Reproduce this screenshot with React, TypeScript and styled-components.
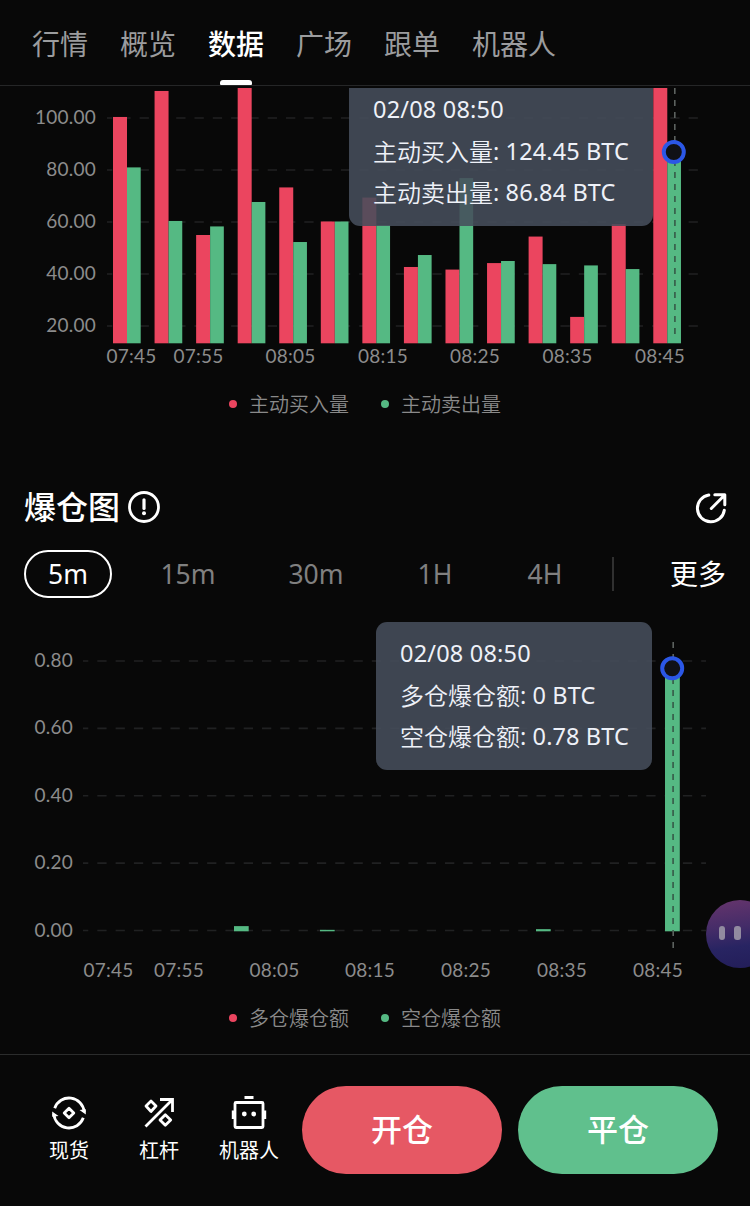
import React from "react";
import styled, { createGlobalStyle } from "styled-components";

const GlobalStyle = createGlobalStyle`
  * { box-sizing: border-box; }
  body { margin: 0; background: #080808; }
  button { font: inherit; color: inherit; background: none; border: 0; padding: 0; }
`;

const Screen = styled.div`
  position: relative;
  display: flex;
  flex-direction: column;
  width: 750px;
  height: 1206px;
  overflow: hidden;
  background: #080808;
  color: #fff;
  font-family: "Noto Sans", "Noto Sans CJK SC", sans-serif;
`;

const Tabs = styled.nav`
  display: flex;
  flex: none;
  gap: 32px;
  height: 86px;
  padding-left: 32px;
  border-bottom: 1px solid #252627;
`;

const Tab = styled.button<{ $active?: boolean }>`
  position: relative;
  height: 85px;
  padding-top: 1px;
  font-family: "Noto Sans CJK SC", sans-serif;
  font-size: 28px;
  line-height: 84px;
  font-weight: ${(p) => (p.$active ? 500 : 400)};
  color: ${(p) => (p.$active ? "#fff" : "#9b9c9e")};

  &::after {
    content: "";
    display: ${(p) => (p.$active ? "block" : "none")};
    position: absolute;
    left: 12px;
    bottom: 0;
    width: 32px;
    height: 5px;
    border-radius: 3px 3px 1px 1px;
    background: #fff;
  }
`;

const ChartBox = styled.div<{ $height: number; $top?: number }>`
  position: relative;
  flex: none;
  height: ${(p) => p.$height}px;
  margin-top: ${(p) => p.$top ?? 0}px;
  overflow: hidden;

  svg { display: block; }
`;

const AxisText = styled.text`
  font-family: Lato, sans-serif;
  font-size: 19px;
  letter-spacing: 0.25px;
  fill: #8c8c8c;
`;

const Tooltip = styled.div<{ $x: number; $y: number; $width: number }>`
  position: absolute;
  left: ${(p) => p.$x}px;
  top: ${(p) => p.$y}px;
  width: ${(p) => p.$width}px;
  height: 148px;
  padding: 10px 0 0 24px;
  border-radius: 11px;
  background: rgba(70, 77, 91, 0.88);
  color: #eef1f8;
  font-size: 23.5px;
  white-space: nowrap;
`;

const TipDate = styled.div`
  height: 43px;
  line-height: 42px;
  letter-spacing: 0.2px;
`;

const TipRow = styled.div`
  display: flex;
  height: 41px;
  line-height: 41px;
  letter-spacing: 0.1px;
  white-space: pre;
`;

const TipLabel = styled.span`
  font-family: "Noto Sans CJK SC", sans-serif;
  font-size: 24px;
  line-height: 39px;
  letter-spacing: 0;
  font-weight: 350;
`;

const Legend = styled.div<{ $bottom: number }>`
  display: flex;
  flex: none;
  justify-content: center;
  gap: 32px;
  height: 28px;
  padding-right: 20px;
  margin-bottom: ${(p) => p.$bottom}px;
`;

const LegendItem = styled.span<{ $color: string }>`
  display: flex;
  align-items: center;
  gap: 12px;
  color: #8a8a8a;
  font-family: "Noto Sans CJK SC", sans-serif;
  font-size: 20px;
  font-weight: 350;
  line-height: 30px;

  &::before {
    content: "";
    width: 8px;
    height: 8px;
    border-radius: 50%;
    background: ${(p) => p.$color};
  }
`;

const SectionHead = styled.header`
  display: flex;
  flex: none;
  align-items: center;
  height: 48px;
  padding: 0 22px 0 24px;
`;

const Title = styled.h2`
  margin: 0 8px 0 0;
  padding-bottom: 3px;
  font-family: "Noto Sans CJK SC", sans-serif;
  font-size: 32px;
  line-height: 45px;
  font-weight: 500;
`;

const Spacer = styled.span`
  flex: 1;
`;

const Ranges = styled.div`
  display: flex;
  flex: none;
  align-items: center;
  gap: 24px;
  height: 48px;
  margin-top: 19px;
  padding: 0 24px;
`;

const Range = styled.button<{ $width: number; $active?: boolean }>`
  width: ${(p) => p.$width}px;
  height: 48px;
  border: 2px solid ${(p) => (p.$active ? "#fff" : "transparent")};
  border-radius: 24px;
  color: ${(p) => (p.$active ? "#fff" : "#808080")};
  font-size: 26.5px;
  line-height: 44px;
`;

const Divider = styled.span`
  width: 2px;
  height: 34px;
  background: #303030;
`;

const More = styled.button`
  margin-left: auto;
  padding-bottom: 2px;
  font-family: "Noto Sans CJK SC", sans-serif;
  font-size: 28px;
  line-height: 44px;
`;

const BottomBar = styled.footer`
  display: flex;
  flex: 1;
  align-items: flex-start;
  padding: 31px 32px 0 24px;
  border-top: 1px solid #2b2c2c;
`;

const Shortcut = styled.button`
  display: flex;
  flex-direction: column;
  align-items: center;
  width: 90px;
  padding-top: 9px;
  font-family: "Noto Sans CJK SC", sans-serif;
  font-size: 20px;
  line-height: 30px;

  svg { display: block; margin-bottom: 4px; }
`;

const Actions = styled.div`
  display: flex;
  gap: 16px;
  margin-left: 8px;
`;

const Action = styled.button<{ $color: string }>`
  width: 200px;
  height: 88px;
  padding-bottom: 4px;
  border-radius: 44px;
  background: ${(p) => p.$color};
  font-family: "Noto Sans CJK SC", sans-serif;
  font-size: 31px;
  line-height: 84px;
  font-weight: 500;
`;

const Assistant = styled.div`
  position: absolute;
  left: 706px;
  top: 900px;
  display: flex;
  gap: 9px;
  width: 68px;
  height: 68px;
  padding: 26px 0 0 12.5px;
  border-radius: 50%;
  background: linear-gradient(172deg, #64346c 3%, #442c68 40%, #282462 66%, #221d58 100%);
`;

const Eye = styled.span`
  width: 6.5px;
  height: 14px;
  border-radius: 3px;
  background: #928ba0;
`;

const RED = "#eb455f";
const GREEN = "#55b983";

interface Tick { value: number; label: string }
interface ChartProps {
  height: number;
  left: number;
  right: number;
  labelX: number;
  baseline: number;
  ticks: Tick[];
  y: (v: number) => number;
  times: [number, string][];
  timesY: number;
  bars: { x: number; width: number; value: number; color: string }[];
  cursor: { x: number; from: number; to: number; cx: number; cy: number };
}

function BarChart(c: ChartProps) {
  return (
    <svg width="750" height={c.height}>
      {c.ticks.map((t) => (
        <g key={t.label}>
          <line x1={c.left} x2={c.right} y1={c.y(t.value)} y2={c.y(t.value)} stroke="#202122" strokeWidth="1.6" strokeDasharray="9.3 9" strokeDashoffset="4" />
          <AxisText x={c.labelX} y={c.y(t.value) + 6} textAnchor="end">{t.label}</AxisText>
        </g>
      ))}
      {c.bars.map((b, i) => (
        <rect key={i} x={b.x} y={c.y(b.value)} width={b.width} height={c.baseline - c.y(b.value)} fill={b.color} />
      ))}
      <line x1={c.cursor.x} x2={c.cursor.x} y1={c.cursor.from} y2={c.cursor.to} stroke="#5c625f" strokeWidth="1.6" strokeDasharray="6 6" />
      <line x1={c.cursor.x} x2={c.cursor.x} y1={c.cursor.cy} y2={Math.min(c.cursor.to, c.baseline)} stroke="#35664d" strokeWidth="1.6" strokeDasharray="6 6" strokeDashoffset={(c.cursor.cy - c.cursor.from) % 12} />
      <circle cx={c.cursor.cx} cy={c.cursor.cy} r="10" fill="#101116" stroke="#2b57e6" strokeWidth="4" />
      {c.times.map(([x, label]) => (
        <AxisText key={label} x={x} y={c.timesY} textAnchor="middle">{label}</AxisText>
      ))}
    </svg>
  );
}

const volumes: [number, number][] = [
  [100.4, 81], [110.4, 60.4], [55, 58.3], [113, 67.7], [73.3, 52.3], [60.2, 60.2], [69.4, 58.8],
  [42.7, 47.3], [41.7, 76.9], [44.2, 45], [54.4, 43.8], [23.5, 43.3], [59.2, 41.9], [124.45, 86.84],
];

const volumeBars = volumes.flatMap(([buy, sell], i) => [
  { x: 113 + i * 41.56, width: 14, value: buy, color: RED },
  { x: 127 + i * 41.56, width: 13.7, value: sell, color: GREEN },
]);

const liquidationBars = [
  { x: 234, width: 14.7, value: 0.013, color: GREEN },
  { x: 320, width: 14.7, value: 0.002, color: GREEN },
  { x: 536, width: 14.7, value: 0.004, color: GREEN },
  { x: 665, width: 14.8, value: 0.78, color: GREEN },
];

const timeLabels = ["07:45", "07:55", "08:05", "08:15", "08:25", "08:35", "08:45"];
const at = (xs: number[]) => xs.map((x, i) => [x, timeLabels[i]] as [number, string]);

const SpotIcon = () => (
  <svg width="36" height="36" viewBox="0 0 36 36" fill="none" stroke="#fff" strokeWidth="2.8">
    <path d="M3.7 13.2A15.2 15.2 0 0 1 33.2 17" />
    <path d="M32.3 22.8A15.2 15.2 0 0 1 2.8 19" />
    <path d="M28.5 15L34.8 14.2V19.4ZM7.5 21L1.2 21.8V16.6Z" fill="#fff" stroke="none" />
    <path d="M18 13.2L22.8 18L18 22.8L13.2 18Z" strokeLinejoin="round" />
  </svg>
);

const LeverIcon = () => (
  <svg width="36" height="36" viewBox="0 0 36 36" fill="none" stroke="#fff" strokeWidth="2.8">
    <path d="M4.5 31.5L30.5 5.5M19 4.5H31.5V17" />
    <path d="M10 6L15 11L10 16.5L5 11ZM24.3 19.7L29.7 25L24.3 30.3L19 25Z" strokeLinejoin="round" />
  </svg>
);

const RobotIcon = () => (
  <svg width="36" height="36" viewBox="0 0 36 36" fill="none" stroke="#fff" strokeWidth="2.8">
    <rect x="4" y="7.5" width="28" height="25" rx="1" />
    <path d="M13.5 2.5H22.5M2.2 15.5V24M33.8 15.5V24" />
    <circle cx="13.3" cy="19" r="2.4" fill="#fff" stroke="none" />
    <circle cx="22.7" cy="19" r="2.4" fill="#fff" stroke="none" />
  </svg>
);

const InfoIcon = () => (
  <svg width="32" height="32" viewBox="0 0 32 32" fill="none" stroke="#fff">
    <circle cx="16" cy="16" r="14.5" strokeWidth="2.8" />
    <path d="M16 8.8V17.5" strokeWidth="3.2" strokeLinecap="round" />
    <circle cx="16" cy="22.3" r="2" fill="#fff" stroke="none" />
  </svg>
);

const ShareIcon = () => (
  <svg width="34" height="34" viewBox="0 0 34 34" fill="none" stroke="#fff" strokeWidth="3" strokeLinecap="round" strokeLinejoin="round">
    <path d="M14.8 5A13.5 13.5 0 1 0 30.3 20.2" />
    <path d="M17.3 18.5L30.5 5.2M20.8 4.8H30.8V14.8" />
  </svg>
);

export default function App() {
  return (
    <Screen>
      <GlobalStyle />
      <Tabs>
        <Tab>行情</Tab>
        <Tab>概览</Tab>
        <Tab $active>数据</Tab>
        <Tab>广场</Tab>
        <Tab>跟单</Tab>
        <Tab>机器人</Tab>
      </Tabs>

      <ChartBox $height={302} $top={2}>
        <BarChart
          height={302}
          left={107}
          right={705}
          labelX={96}
          baseline={255.3}
          y={(v) => 30 + (100 - v) * 2.6}
          ticks={[100, 80, 60, 40, 20].map((value) => ({ value, label: value.toFixed(2) }))}
          bars={volumeBars}
          times={at([131.5, 198.5, 290.5, 383, 475, 567.5, 660])}
          timesY={275.3}
          cursor={{ x: 674.8, from: 0, to: 247, cx: 673.8, cy: 64 }}
        />
        <Tooltip $x={349} $y={-10} $width={304}>
          <TipDate>02/08 08:50</TipDate>
          <TipRow><TipLabel>主动买入量</TipLabel>: 124.45 BTC</TipRow>
          <TipRow><TipLabel>主动卖出量</TipLabel>: 86.84 BTC</TipRow>
        </Tooltip>
      </ChartBox>
      <Legend $bottom={65}>
        <LegendItem $color={RED}>主动买入量</LegendItem>
        <LegendItem $color={GREEN}>主动卖出量</LegendItem>
      </Legend>

      <SectionHead>
        <Title>爆仓图</Title>
        <InfoIcon />
        <Spacer />
        <ShareIcon />
      </SectionHead>
      <Ranges>
        <Range $width={88} $active>5m</Range>
        <Range $width={104}>15m</Range>
        <Range $width={104}>30m</Range>
        <Range $width={86}>1H</Range>
        <Range $width={86}>4H</Range>
        <Divider />
        <More>更多</More>
      </Ranges>

      <ChartBox $height={394} $top={12}>
        <BarChart
          height={394}
          left={83}
          right={706}
          labelX={73}
          baseline={321.3}
          y={(v) => 320.5 - v * 336.9}
          ticks={[0.8, 0.6, 0.4, 0.2, 0].map((value) => ({ value, label: value.toFixed(2) }))}
          bars={liquidationBars}
          times={at([108.5, 179, 274.5, 370, 466, 562, 658])}
          timesY={367}
          cursor={{ x: 673.2, from: 32, to: 338, cx: 672.2, cy: 58.3 }}
        />
        <Tooltip $x={376} $y={12} $width={276}>
          <TipDate>02/08 08:50</TipDate>
          <TipRow><TipLabel>多仓爆仓额</TipLabel>: 0 BTC</TipRow>
          <TipRow><TipLabel>空仓爆仓额</TipLabel>: 0.78 BTC</TipRow>
        </Tooltip>
      </ChartBox>
      <Legend $bottom={22}>
        <LegendItem $color={RED}>多仓爆仓额</LegendItem>
        <LegendItem $color={GREEN}>空仓爆仓额</LegendItem>
      </Legend>

      <BottomBar>
        <Shortcut><SpotIcon />现货</Shortcut>
        <Shortcut><LeverIcon />杠杆</Shortcut>
        <Shortcut><RobotIcon />机器人</Shortcut>
        <Actions>
          <Action $color="#e65864">开仓</Action>
          <Action $color="#60c08d">平仓</Action>
        </Actions>
      </BottomBar>

      <Assistant>
        <Eye />
        <Eye />
      </Assistant>
    </Screen>
  );
}
